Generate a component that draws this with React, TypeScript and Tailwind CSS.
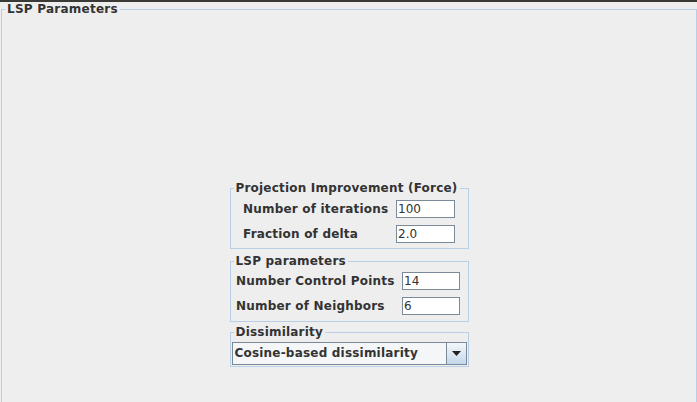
import React from "react";

const font = { fontFamily: '"DejaVu Sans", Verdana, sans-serif' };

function TitledBox({ title, className, children }: { title: string; className?: string; children: React.ReactNode }) {
  return (
    <fieldset className={`border border-[#b8cfe5] ${className ?? ""}`}>
      <legend className="ml-[3px] px-[2px] text-[12px] leading-[14px] font-bold tracking-[0.2px] text-[#333333]">{title}</legend>
      {children}
    </fieldset>
  );
}

function Field({ value }: { value: string }) {
  return (
    <div className="h-[18px] w-full border border-[#7a8a99] bg-white pl-[1px] text-[12px] leading-[16px] text-[#333333]">
      {value}
    </div>
  );
}

function Row({ label, value }: { label: string; value: string }) {
  return (
    <>
      <div className="h-[18px] whitespace-nowrap text-[12px] leading-[18px] font-bold tracking-[0.2px] text-[#333333]">{label}</div>
      <Field value={value} />
    </>
  );
}

export default function App() {
  return (
    <div className="h-[402px] w-[697px] overflow-hidden bg-[#eeeeee]" style={font}>
      <div className="h-[2px] bg-[#3a3a36]" />
      <fieldset className="ml-[1px] h-[430px] w-[696px] border border-[#b8cfe5]">
        <legend className="ml-[3px] px-[2px] text-[12px] leading-[14px] font-bold tracking-[0.25px] text-[#333333]">LSP Parameters</legend>
        <div className="mx-auto flex w-[239px] flex-col pt-[165px]">
          <TitledBox title="Projection Improvement (Force)">
            <div className="flex justify-center pt-[5px] pb-[5px]">
              <div className="grid grid-cols-[153px_59px] gap-y-[7px]">
                <Row label="Number of iterations" value="100" />
                <Row label="Fraction of delta" value="2.0" />
              </div>
            </div>
          </TitledBox>
          <TitledBox title="LSP parameters" className="mt-[5px]">
            <div className="flex justify-center pt-[4px] pb-[6px]">
              <div className="grid grid-cols-[166px_58px] gap-y-[7px] pr-[2px]">
                <Row label="Number Control Points" value="14" />
                <Row label="Number of Neighbors" value="6" />
              </div>
            </div>
          </TitledBox>
          <TitledBox title="Dissimilarity" className="mt-[3px]">
            <div className="px-[1px] pt-[3px] pb-[1px]">
              <div className="flex h-[23px] border border-[#7a8a99] bg-[#f5f6f8]">
                <div className="flex-1 pl-[2px] text-[12px] leading-[21px] font-bold tracking-[0.2px] text-[#333333]">
                  Cosine-based dissimilarity
                </div>
                <div className="flex w-[20px] items-center justify-center border-l border-[#7a8a99] bg-gradient-to-b from-[#f4f8fb] to-[#c5d7ea]">
                  <svg width="9" height="5" viewBox="0 0 9 5">
                    <path d="M0 0H9L4.5 5Z" fill="#222222" />
                  </svg>
                </div>
              </div>
            </div>
          </TitledBox>
        </div>
      </fieldset>
    </div>
  );
}
